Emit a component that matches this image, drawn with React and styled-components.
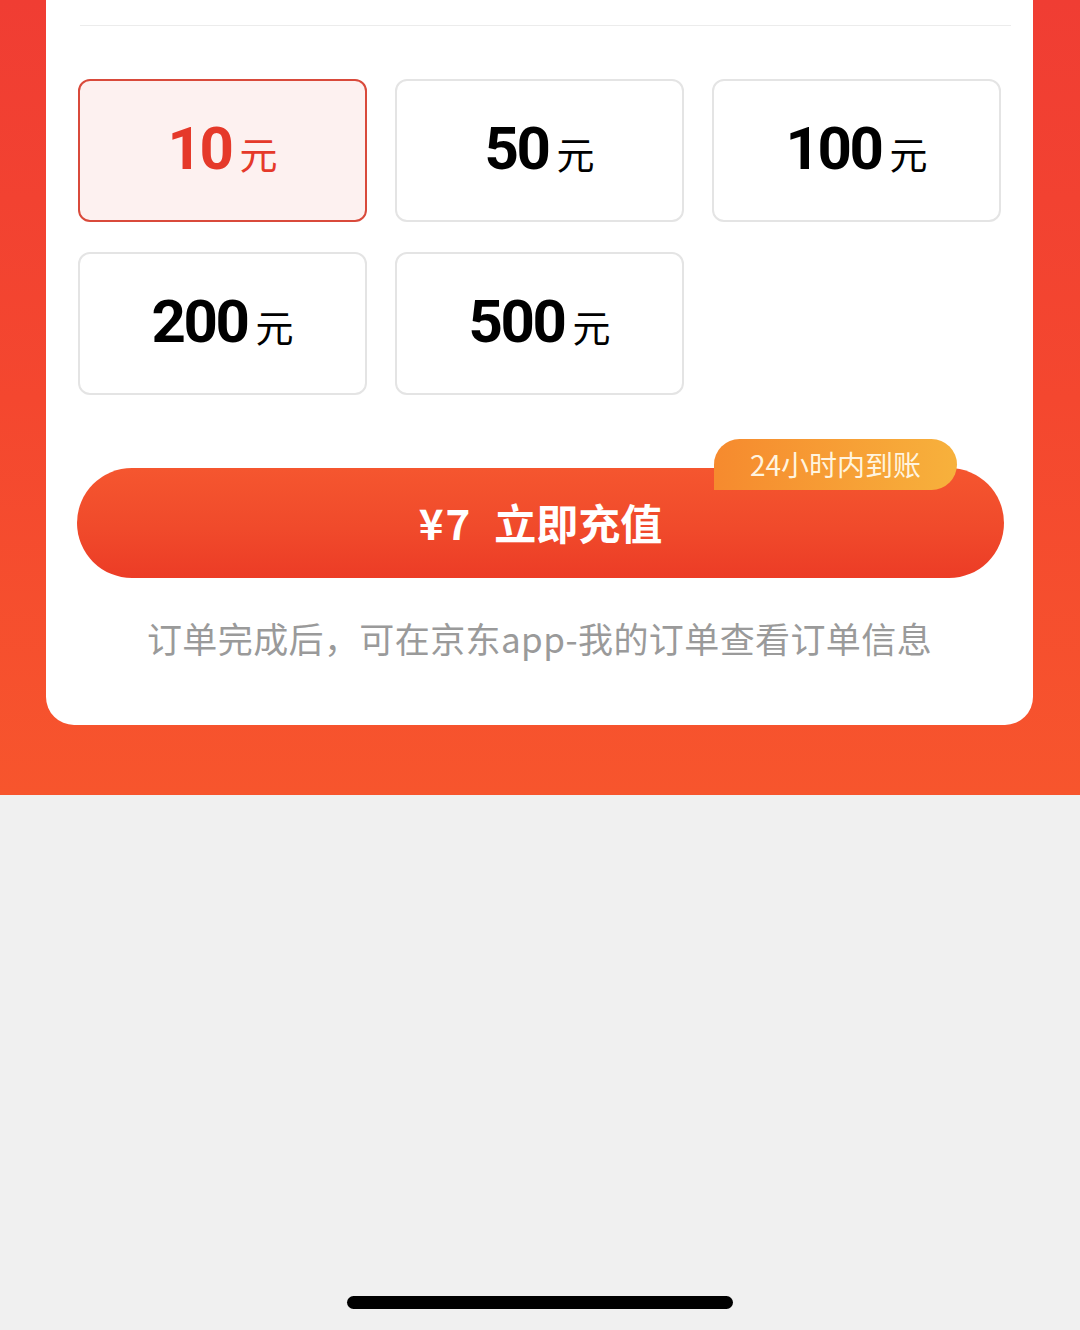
import React, { useState } from "react";
import styled, { createGlobalStyle } from "styled-components";

const amounts = [10, 50, 100, 200, 500];

const App = () => {
  const [selected, setSelected] = useState(10);

  return (
    <>
      <GlobalStyle />
      <StPage>
        <StRedSection>
          <StCard>
            <StDivider />
            <StGrid>
              {amounts.map((amount) => (
                <StTile
                  key={amount}
                  $active={amount === selected}
                  onClick={() => setSelected(amount)}
                >
                  <StNumber>{amount}</StNumber>
                  <StUnit>元</StUnit>
                </StTile>
              ))}
            </StGrid>
            <StButtonWrap>
              <StBadge>24小时内到账</StBadge>
              <StPayButton>
                <StPrice>¥7</StPrice>
                立即充值
              </StPayButton>
            </StButtonWrap>
            <StNotice>订单完成后，可在京东app-我的订单查看订单信息</StNotice>
          </StCard>
        </StRedSection>
        <StGraySection>
          <StHomeBar />
        </StGraySection>
      </StPage>
    </>
  );
};

const GlobalStyle = createGlobalStyle`
  body {
    margin: 0;
    font-family: Roboto, "Noto Sans CJK SC", sans-serif;
  }
`;

const StPage = styled.div`
  width: 1080px;
  height: 1330px;
  display: flex;
  flex-direction: column;
  background: #f0f0f0;
`;

const StRedSection = styled.div`
  height: 795px;
  box-sizing: border-box;
  padding: 0 47px 70px 46px;
  background: linear-gradient(180deg, #f03d33 0%, #f4472f 50%, #f7552d 100%);
`;

const StCard = styled.div`
  height: 725px;
  box-sizing: border-box;
  background: #fff;
  border-radius: 0 0 28px 28px;
  padding: 25px 32px 0 32px;
  display: flex;
  flex-direction: column;
`;

const StDivider = styled.div`
  height: 1px;
  background: #ececec;
  margin: 0 -10px 0 2px;
`;

const StGrid = styled.div`
  margin-top: 53px;
  display: grid;
  grid-template-columns: repeat(3, 289px);
  column-gap: 28px;
  row-gap: 30px;
`;

const StTile = styled.div`
  height: 143px;
  box-sizing: border-box;
  border-radius: 12px;
  border: 2px solid ${({ $active }) => ($active ? "#d94a3b" : "#e4e4e4")};
  background: ${({ $active }) => ($active ? "#fdf1f0" : "#fff")};
  color: ${({ $active }) => ($active ? "#e5392a" : "#000")};
  display: flex;
  align-items: baseline;
  justify-content: center;
  padding-top: 38px;
  cursor: pointer;
`;

const StNumber = styled.span`
  font-family: Roboto, sans-serif;
  font-weight: 700;
  font-size: 60px;
  line-height: 1;
  letter-spacing: -2.5px;
`;

const StUnit = styled.span`
  font-family: "Noto Sans CJK SC", sans-serif;
  font-size: 38px;
  line-height: 1;
  margin-left: 8px;
`;

const StButtonWrap = styled.div`
  position: relative;
  margin-top: 73px;
`;

const StBadge = styled.div`
  position: absolute;
  top: -29px;
  right: 44px;
  width: 243px;
  height: 51px;
  box-sizing: border-box;
  border-radius: 26px 26px 26px 0;
  background: linear-gradient(90deg, #f68a2e 0%, #f7b13c 100%);
  color: #fff4df;
  font-family: "Noto Sans CJK SC", sans-serif;
  font-size: 28px;
  display: flex;
  align-items: center;
  justify-content: center;
  padding-bottom: 2px;
`;

const StPayButton = styled.div`
  height: 110px;
  width: 927px;
  margin-left: -1px;
  border-radius: 55px;
  background: linear-gradient(180deg, #f5562f 0%, #f04a2b 55%, #ec3c26 100%);
  color: #fff;
  font-family: "Noto Sans CJK SC", sans-serif;
  font-weight: 700;
  font-size: 42px;
  display: flex;
  align-items: center;
  justify-content: center;
  padding-bottom: 4px;
  box-sizing: border-box;
`;

const StPrice = styled.span`
  margin-right: 22px;
  letter-spacing: 2px;
`;

const StNotice = styled.div`
  margin-top: 36px;
  text-align: center;
  color: #9a9a9a;
  font-family: "Noto Sans CJK SC", sans-serif;
  font-size: 35px;
  letter-spacing: 0.4px;
  line-height: 48px;
`;

const StGraySection = styled.div`
  flex: 1;
  display: flex;
  justify-content: center;
  align-items: flex-end;
  padding-bottom: 21px;
`;

const StHomeBar = styled.div`
  width: 386px;
  height: 13px;
  border-radius: 7px;
  background: #000;
`;

export default App;
